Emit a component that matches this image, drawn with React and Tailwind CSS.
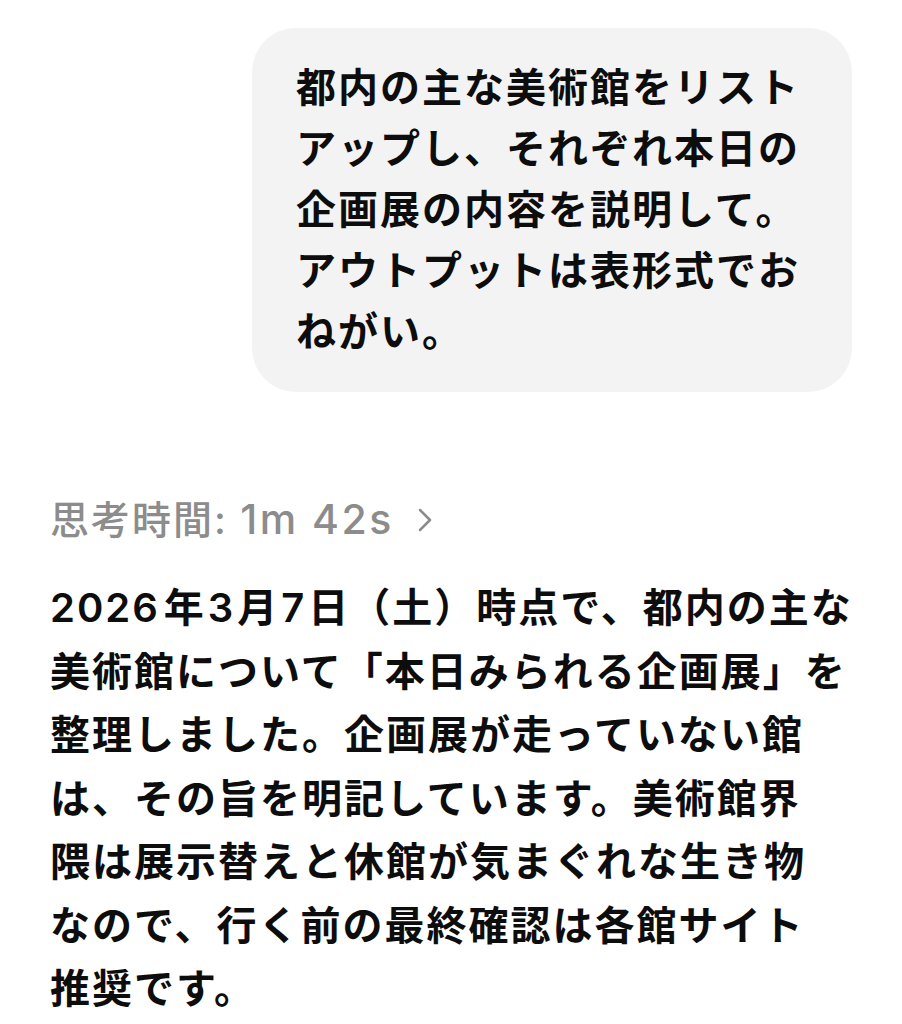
import React from 'react';

const font = { fontFamily: '"Inter", "Liberation Sans", "Noto Sans CJK JP", sans-serif' };

const lines = [
    <>
        <span className="mr-[4px]">2026</span>年<span className="mx-[2px]">3</span>月<span className="mx-[2px]">7</span>日（土）時点で、都内の主な
    </>,
    '美術館について「本日みられる企画展」を',
    '整理しました。企画展が走っていない館',
    'は、その旨を明記しています。美術館界',
    '隈は展示替えと休館が気まぐれな生き物',
    'なので、行く前の最終確認は各館サイト',
    '推奨です。',
];

const App = () => {
    return (
        <div className="min-h-screen bg-white text-[#0d0d0d]" style={font}>
            {/* User message */}
            <div className="flex justify-end pt-[28px] pr-[50px]">
                <div className="w-[600px] rounded-[44px] bg-[#f3f3f3] px-[44px] pt-[29px] pb-[30px] text-[40px] leading-[61px] tracking-[2px] font-semibold">
                    都内の主な美術館をリストアップし、それぞれ本日の企画展の内容を説明して。アウトプットは表形式でおねがい。
                </div>
            </div>

            {/* Assistant response */}
            <div className="px-[50px] pt-[105px]">
                <button className="flex items-center gap-[24px] text-[39px] leading-[44px] font-medium text-[#8c8c8c]">
                    <span className="tracking-[2px]">
                        思考時間: <span className="text-[41px] tracking-[2.5px]">1m 42s</span>
                    </span>
                    <svg width="14" height="24" viewBox="0 0 14 24" fill="none" stroke="currentColor" strokeWidth="2.5" strokeLinecap="round" strokeLinejoin="round">
                        <path d="M2 2l10 10-10 10" />
                    </svg>
                </button>
                <div className="mt-[34px] text-[40px] leading-[63.5px] tracking-[2px] font-semibold">
                    {lines.map((line, idx) => (
                        <div key={idx} className="whitespace-nowrap">{line}</div>
                    ))}
                </div>
            </div>
        </div>
    );
};

export default App;
